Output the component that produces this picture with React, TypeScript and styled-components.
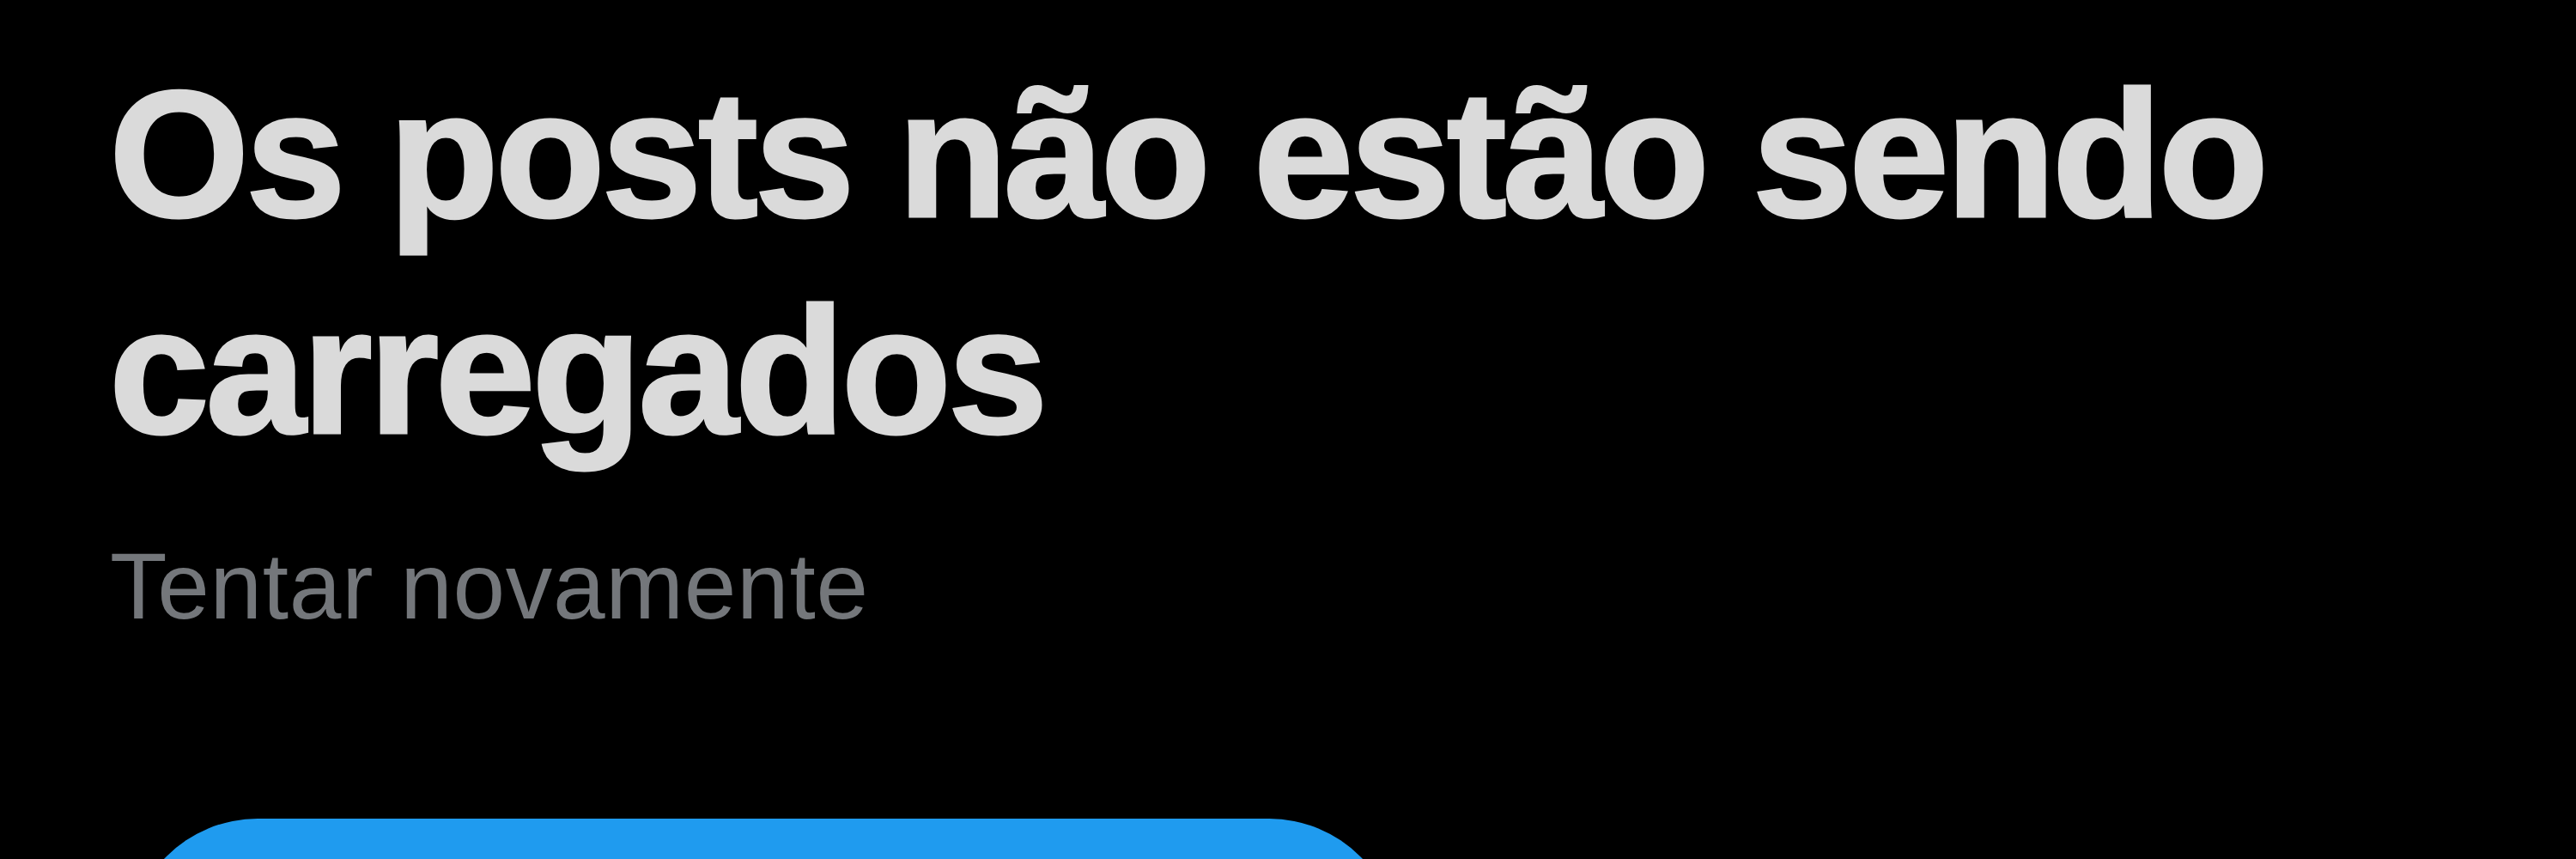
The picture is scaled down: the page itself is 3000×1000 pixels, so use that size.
import React from "react";
import styled, { createGlobalStyle } from "styled-components";

const GlobalStyle = createGlobalStyle`
  html, body {
    margin: 0;
    padding: 0;
    background: #000000;
  }
  body {
    font-family: "Liberation Sans", Arial, sans-serif;
    -webkit-font-smoothing: antialiased;
  }
`;

const Screen = styled.main`
  display: flex;
  flex-direction: column;
  align-items: flex-start;
  height: 1000px;
  overflow: hidden;
  padding: 54px 0 0 127px;
  box-sizing: border-box;
  background: #000000;
`;

const Title = styled.h1`
  margin: 0;
  max-width: 2760px;
  font-family: "Liberation Sans", Arial, sans-serif;
  font-weight: 700;
  font-size: 210px;
  line-height: 252px;
  letter-spacing: -4.3px;
  color: #dadada;
  -webkit-text-stroke: 3px #dadada;
`;

const Subtitle = styled.p`
  margin: 59px 0 0 1px;
  font-family: "Liberation Sans", Arial, sans-serif;
  font-weight: 400;
  font-size: 109px;
  line-height: 130px;
  letter-spacing: 0.7px;
  color: #74777b;
`;

const RetryButton = styled.button`
  flex: none;
  margin: 206px 0 0 23px;
  width: 1478px;
  height: 300px;
  border: none;
  border-radius: 150px;
  background: #1f9bef;
  cursor: pointer;
`;

export default function App() {
  return (
    <>
      <GlobalStyle />
      <Screen>
        <Title>Os posts não estão sendo carregados</Title>
        <Subtitle>Tentar novamente</Subtitle>
        <RetryButton type="button" aria-label="Tentar novamente" />
      </Screen>
    </>
  );
}
